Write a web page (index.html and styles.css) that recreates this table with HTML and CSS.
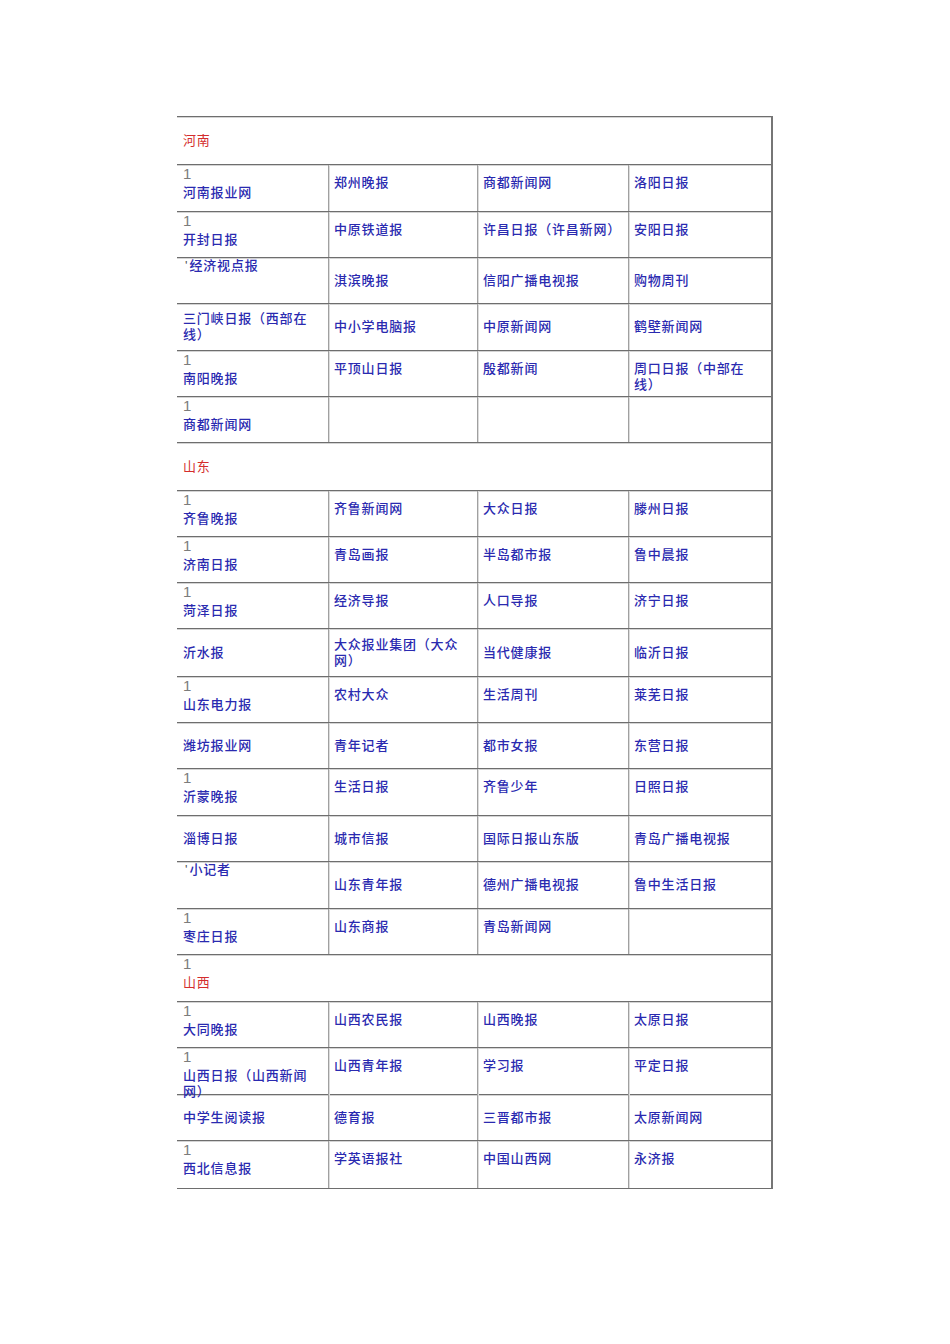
FILE: index.html
```html
<!DOCTYPE html>
<html lang="zh">
<head>
<meta charset="utf-8">
<title>报刊列表</title>
<link rel="stylesheet" href="styles.css">
</head>
<body>
<div class="sheet">
  <div class="row head r48"><div class="cell span prov">河南</div></div>

  <div class="row r47">
    <div class="cell num"><span class="one">1</span><span class="name">河南报业网</span></div>
    <div class="cell top">郑州晚报</div>
    <div class="cell top">商都新闻网</div>
    <div class="cell top">洛阳日报</div>
  </div>
  <div class="row r46">
    <div class="cell num"><span class="one">1</span><span class="name">开封日报</span></div>
    <div class="cell top">中原铁道报</div>
    <div class="cell top">许昌日报（许昌新网）</div>
    <div class="cell top">安阳日报</div>
  </div>
  <div class="row r46">
    <div class="cell quote"><span class="tick">'</span>经济视点报</div>
    <div class="cell">淇滨晚报</div>
    <div class="cell">信阳广播电视报</div>
    <div class="cell">购物周刊</div>
  </div>
  <div class="row r47">
    <div class="cell">三门峡日报（西部在<br>线）</div>
    <div class="cell">中小学电脑报</div>
    <div class="cell">中原新闻网</div>
    <div class="cell">鹤壁新闻网</div>
  </div>
  <div class="row r46">
    <div class="cell num"><span class="one">1</span><span class="name">南阳晚报</span></div>
    <div class="cell top">平顶山日报</div>
    <div class="cell top">殷都新闻</div>
    <div class="cell top">周口日报（中部在<br>线）</div>
  </div>
  <div class="row r46">
    <div class="cell num"><span class="one">1</span><span class="name">商都新闻网</span></div>
    <div class="cell top"></div>
    <div class="cell top"></div>
    <div class="cell top"></div>
  </div>

  <div class="row head r48"><div class="cell span prov">山东</div></div>

  <div class="row r46">
    <div class="cell num"><span class="one">1</span><span class="name">齐鲁晚报</span></div>
    <div class="cell top">齐鲁新闻网</div>
    <div class="cell top">大众日报</div>
    <div class="cell top">滕州日报</div>
  </div>
  <div class="row r46">
    <div class="cell num"><span class="one">1</span><span class="name">济南日报</span></div>
    <div class="cell top">青岛画报</div>
    <div class="cell top">半岛都市报</div>
    <div class="cell top">鲁中晨报</div>
  </div>
  <div class="row r46">
    <div class="cell num"><span class="one">1</span><span class="name">菏泽日报</span></div>
    <div class="cell top">经济导报</div>
    <div class="cell top">人口导报</div>
    <div class="cell top">济宁日报</div>
  </div>
  <div class="row r48">
    <div class="cell">沂水报</div>
    <div class="cell">大众报业集团（大众<br>网）</div>
    <div class="cell">当代健康报</div>
    <div class="cell">临沂日报</div>
  </div>
  <div class="row r46">
    <div class="cell num"><span class="one">1</span><span class="name">山东电力报</span></div>
    <div class="cell top">农村大众</div>
    <div class="cell top">生活周刊</div>
    <div class="cell top">莱芜日报</div>
  </div>
  <div class="row r46">
    <div class="cell">潍坊报业网</div>
    <div class="cell">青年记者</div>
    <div class="cell">都市女报</div>
    <div class="cell">东营日报</div>
  </div>
  <div class="row r47">
    <div class="cell num"><span class="one">1</span><span class="name">沂蒙晚报</span></div>
    <div class="cell top">生活日报</div>
    <div class="cell top">齐鲁少年</div>
    <div class="cell top">日照日报</div>
  </div>
  <div class="row r46">
    <div class="cell">淄博日报</div>
    <div class="cell">城市信报</div>
    <div class="cell">国际日报山东版</div>
    <div class="cell">青岛广播电视报</div>
  </div>
  <div class="row r47">
    <div class="cell quote"><span class="tick">'</span>小记者</div>
    <div class="cell">山东青年报</div>
    <div class="cell">德州广播电视报</div>
    <div class="cell">鲁中生活日报</div>
  </div>
  <div class="row r46">
    <div class="cell num"><span class="one">1</span><span class="name">枣庄日报</span></div>
    <div class="cell top">山东商报</div>
    <div class="cell top">青岛新闻网</div>
    <div class="cell top"></div>
  </div>

  <div class="row head r47"><div class="cell span num"><span class="one">1</span><span class="name prov">山西</span></div></div>

  <div class="row r46">
    <div class="cell num"><span class="one">1</span><span class="name">大同晚报</span></div>
    <div class="cell top">山西农民报</div>
    <div class="cell top">山西晚报</div>
    <div class="cell top">太原日报</div>
  </div>
  <div class="row r47">
    <div class="cell num"><span class="one">1</span><span class="name">山西日报（山西新闻<br>网）</span></div>
    <div class="cell top">山西青年报</div>
    <div class="cell top">学习报</div>
    <div class="cell top">平定日报</div>
  </div>
  <div class="row r46">
    <div class="cell">中学生阅读报</div>
    <div class="cell">德育报</div>
    <div class="cell">三晋都市报</div>
    <div class="cell">太原新闻网</div>
  </div>
  <div class="row r48">
    <div class="cell num"><span class="one">1</span><span class="name">西北信息报</span></div>
    <div class="cell top">学英语报社</div>
    <div class="cell top">中国山西网</div>
    <div class="cell top">永济报</div>
  </div>
</div>
</body>
</html>
```

FILE: styles.css
```css
html, body {
  margin: 0;
  padding: 0;
  background: #ffffff;
}

body {
  padding: 116px 0 0 177px;
  font-family: "Liberation Sans", "Noto Sans CJK SC", sans-serif;
  font-size: 13px;
  font-weight: 500;
  color: #2a2ab0;
}

.sheet {
  width: 596px;
  box-sizing: border-box;
  border-right: 2px solid #767676;
  border-bottom: 1px solid #6e6e6e;
}

.row {
  display: grid;
  grid-template-columns: 151px 149px 151px 143px;
  box-sizing: border-box;
  border-top: 1px solid #6e6e6e;
  box-shadow: inset 0 1px 0 #d4d4d4;
}

.r46 { height: 46px; }
.r47 { height: 47px; }
.r48 { height: 48px; }

.cell {
  display: flex;
  align-items: center;
  line-height: 16px;
  letter-spacing: 0.8px;
  white-space: nowrap;
  padding-left: 6px;
  min-width: 0;
}

.cell + .cell {
  border-left: 1px solid #a0a0a0;
  box-shadow: inset 1px 0 0 #dcdcdc;
  padding-left: 5px;
}

.cell.top {
  align-items: flex-start;
  padding-top: 10px;
}

.cell.quote {
  align-items: flex-start;
  padding-top: 0;
}

.tick {
  color: #555;
  margin-left: 2px;
  margin-right: 2px;
  letter-spacing: 0;
}

.cell.num {
  flex-direction: column;
  align-items: flex-start;
  justify-content: flex-start;
  padding-top: 1px;
}

.one {
  color: #7c7c7c;
  font-size: 15px;
  line-height: 16px;
  letter-spacing: 0;
  font-weight: 400;
}

.name {
  margin-top: 3px;
  line-height: 16px;
}

.cell.span {
  grid-column: 1 / -1;
}

.prov {
  color: #d42d2d;
  font-weight: 400;
}
```
